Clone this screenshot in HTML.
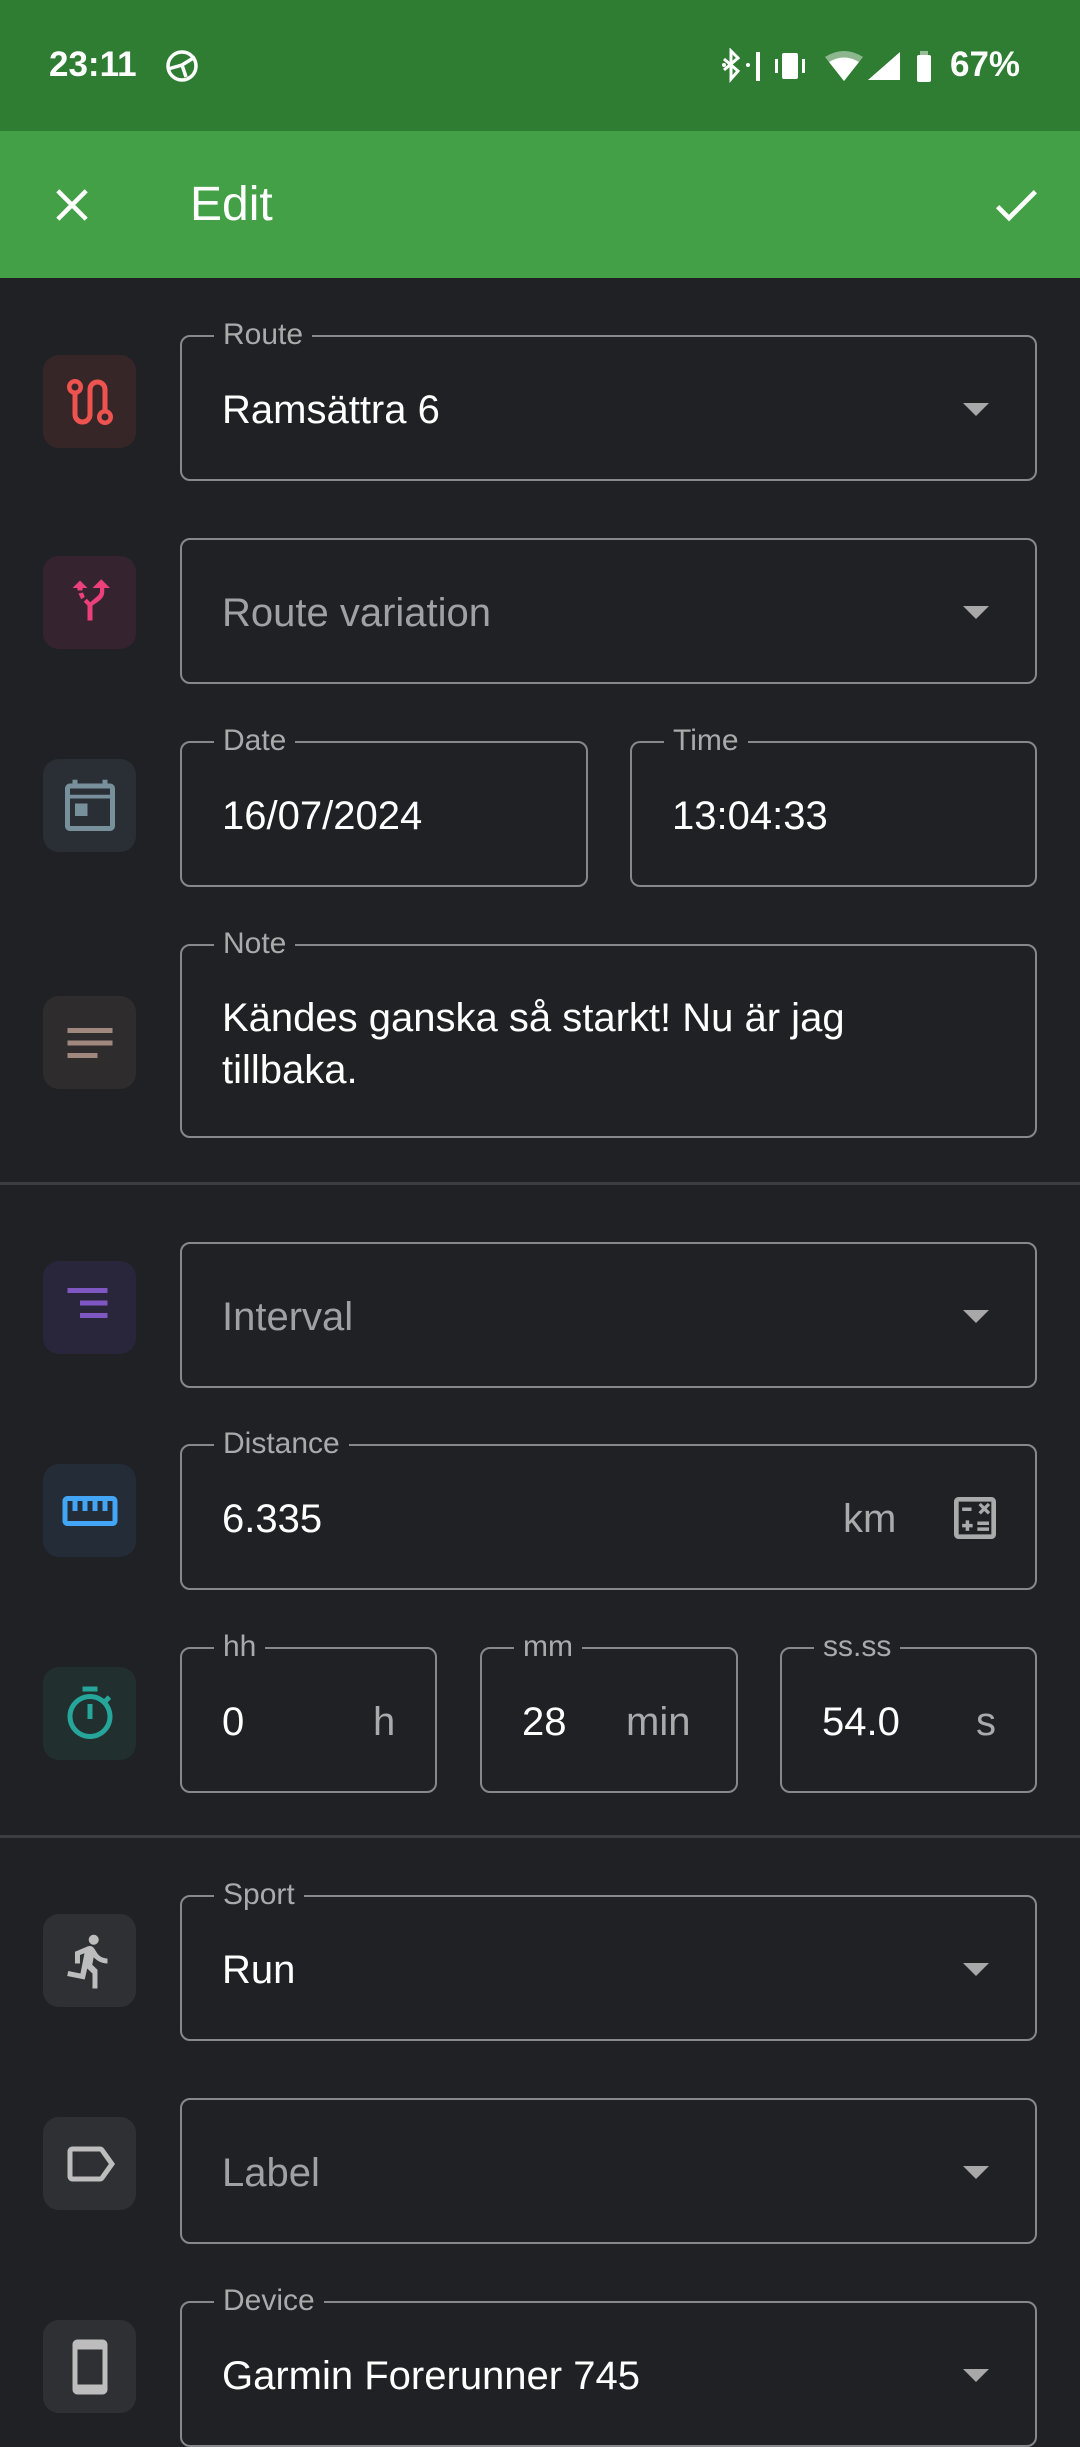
<!DOCTYPE html>
<html><head><meta charset="utf-8"><style>
*{margin:0;padding:0;box-sizing:border-box}
body{width:1080px;height:2400px;background:#202125;font-family:"Liberation Sans",sans-serif;position:relative;overflow:hidden;color:#fff}
.abs{position:absolute}
.sb{left:0;top:0;width:1080px;height:131px;background:#2e7d32}
.ab{left:0;top:131px;width:1080px;height:147px;background:#43a047}
.fld{position:absolute;border:2.5px solid #87888b;border-radius:10px}
.lbl{position:absolute;top:-19px;left:32px;padding:0 9px;background:#202125;color:#a9aaac;font-size:30px;line-height:34px}
.val{position:absolute;left:40px;font-size:40px;line-height:46px;color:#fff;white-space:nowrap}
.ph{color:#a0a1a4}
.tri{position:absolute;right:46px;width:0;height:0;border-left:13px solid transparent;border-right:13px solid transparent;border-top:13px solid #a8a8a8}
.ib{position:absolute;left:43px;width:93px;height:93px;border-radius:16px;display:flex;align-items:center;justify-content:center}
.ib svg{width:60px;height:60px}
.unit{position:absolute;font-size:40px;line-height:46px;color:#a9aaac}
.div{position:absolute;left:0;width:1080px;height:3px;background:#3c3d41}
</style></head><body>
<div class="abs sb"></div>
<div class="abs" style="left:49px;top:45px;font-size:35px;font-weight:bold;line-height:40px">23:11</div>
<svg class="abs" style="left:164px;top:48px" width="38" height="36" viewBox="0 0 38 34"><circle cx="18" cy="17" r="14" fill="none" stroke="#fff" stroke-width="3.5"/><path d="M4 20 L18 16 L31 8 M18 16 L22 28" stroke="#fff" stroke-width="3.5" fill="none"/></svg>
<svg class="abs" style="left:722px;top:48px" width="300" height="36" viewBox="0 0 300 34">
<path d="M2 10l14 12-7 8V2l7 7-14 12" stroke="#fff" stroke-width="3" fill="none"/><circle cx="2" cy="16" r="2" fill="#fff"/><circle cx="26" cy="16" r="2" fill="#fff"/><rect x="34" y="3" width="4" height="29" fill="#fff"/>
<rect x="60" y="4" width="16" height="26" rx="2" fill="#fff"/><rect x="53" y="10" width="3" height="14" fill="#fff"/><rect x="80" y="10" width="3" height="14" fill="#fff"/>
<path d="M103 8 Q122 -4 141 8 L122 32z" fill="#fff" opacity=".45"/><path d="M107 13 Q122 4 137 13 L122 32z" fill="#fff"/>
<path d="M146 31 L178 31 L178 3z" fill="#fff"/>
<rect x="198" y="2" width="8" height="6" fill="#fff" opacity=".5"/><rect x="195" y="6" width="14" height="27" rx="2" fill="#fff"/>
</svg>
<div class="abs" style="left:950px;top:45px;font-size:35px;font-weight:bold;line-height:40px">67%</div>
<div class="abs ab"></div>
<svg class="abs" style="left:45px;top:178px" width="54" height="54" viewBox="0 0 24 24"><path fill="#fff" d="M19 6.41L17.59 5 12 10.59 6.41 5 5 6.41 10.59 12 5 17.59 6.41 19 12 13.41 17.59 19 19 17.59 13.41 12z"/></svg>
<div class="abs" style="left:190px;top:178px;font-size:48px;line-height:54px;color:#fff">Edit</div>
<svg class="abs" style="left:988px;top:177px" width="56" height="56" viewBox="0 0 24 24"><path fill="#fff" d="M9 16.17L4.83 12l-1.42 1.41L9 19 21 7l-1.41-1.41z"/></svg>

<div class="ib" style="top:355px;background:#372628"><svg viewBox="0 0 24 24"><path fill="none" stroke="#ef5350" stroke-width="2" d="M6 8.5V17a3 3 0 0 0 6 0V7a3 3 0 0 1 6 0v8.5"/><circle cx="6" cy="6" r="2.3" fill="none" stroke="#ef5350" stroke-width="1.8"/><circle cx="18" cy="18" r="2.3" fill="none" stroke="#ef5350" stroke-width="1.8"/></svg></div>
<div class="fld" style="left:180px;top:335px;width:857px;height:146px"><div class="lbl">Route</div><div class="val" style="top:50px">Ramsättra 6</div><div class="tri" style="top:66px"></div></div>

<div class="ib" style="top:556px;background:#352430"><svg viewBox="0 0 24 24"><path fill="#ec407a" d="M5 6l3-3 3 3H9v1h-2V6z M13 6l3.5-3.5L20 6h-2.3v1.5c0 2-1.2 3-2.5 4L13 13v6h-2v-6l-1.5-1.5 1.2-1.2 1.4 1.4 2.9-2.5c.6-.5 1-1.2 1-2V6z M7.4 8.2l1.8-.4.7 1.8-1.4.9z"/></svg></div>
<div class="fld" style="left:180px;top:538px;width:857px;height:146px"><div class="val ph" style="top:50px">Route variation</div><div class="tri" style="top:66px"></div></div>

<div class="ib" style="top:759px;background:#2a2f35"><svg viewBox="0 0 24 24"><path fill="#78909c" d="M20 3h-1V1.5h-2V3H7V1.5H5V3H4c-1.1 0-2 .9-2 2v15c0 1.1.9 2 2 2h16c1.1 0 2-.9 2-2V5c0-1.1-.9-2-2-2zm0 17H4V9h16v11zm0-12.5H4V5h16v2.5zM6 11h5v5H6z"/></svg></div>
<div class="fld" style="left:180px;top:741px;width:408px;height:146px"><div class="lbl">Date</div><div class="val" style="top:50px">16/07/2024</div></div>
<div class="fld" style="left:630px;top:741px;width:407px;height:146px"><div class="lbl">Time</div><div class="val" style="top:50px">13:04:33</div></div>

<div class="ib" style="top:996px;background:#2e2c2c"><svg viewBox="0 0 24 24"><path fill="#a1887f" d="M3 6h18v2H3zM3 11h18v2H3zM3 16h12v2H3z"/></svg></div>
<div class="fld" style="left:180px;top:944px;width:857px;height:194px"><div class="lbl">Note</div><div class="val" style="top:46px;line-height:52px">Kändes ganska så starkt! Nu är jag<br>tillbaka.</div></div>
<div class="div" style="top:1182px"></div>

<div class="ib" style="top:1261px;background:#29253a"><svg viewBox="0 0 24 24"><path fill="#7e57c2" d="M3 4h16v2H3zM8 9h11v2H8zM8 14h11v2H8z"/></svg></div>
<div class="fld" style="left:180px;top:1242px;width:857px;height:146px"><div class="val ph" style="top:50px">Interval</div><div class="tri" style="top:66px"></div></div>

<div class="ib" style="top:1464px;background:#232c37"><svg viewBox="0 0 24 24"><path fill="#42a5f5" d="M21 6H3c-1.1 0-2 .9-2 2v8c0 1.1.9 2 2 2h18c1.1 0 2-.9 2-2V8c0-1.1-.9-2-2-2zm0 10H3V8h2v4h2V8h2v4h2V8h2v4h2V8h2v4h2V8h2v8z"/></svg></div>
<div class="fld" style="left:180px;top:1444px;width:857px;height:146px"><div class="lbl">Distance</div><div class="val" style="top:50px">6.335</div><div class="unit" style="left:661px;top:50px">km</div>
<svg class="abs" style="left:765px;top:44px" width="56" height="56" viewBox="0 0 24 24"><path fill="#a9aaac" d="M19 3H5c-1.1 0-2 .9-2 2v14c0 1.1.9 2 2 2h14c1.1 0 2-.9 2-2V5c0-1.1-.9-2-2-2zm0 16H5V5h14v14zM6.5 7.5h4v1.5h-4zM13.5 6.5l1 -1 1.5 1.5 1.5-1.5 1 1-1.5 1.5 1.5 1.5-1 1-1.5-1.5-1.5 1.5-1-1 1.5-1.5zM6.5 14.5h1.5V13h1.5v1.5H11V16H9.5v1.5H8V16H6.5zM13 13.5h5V15h-5zM13 16h5v1.5h-5z"/></svg></div>

<div class="ib" style="top:1667px;background:#212f2e"><svg viewBox="0 0 24 24"><path fill="#26a69a" d="M15 1H9v2h6V1zm-4 13h2V8h-2v6zm8.03-6.61l1.42-1.42c-.43-.51-.9-.99-1.410-1.41l-1.42 1.42C16.07 4.74 14.12 4 12 4c-4.97 0-9 4.03-9 9s4.020 9 9 9 9-4.03 9-9c0-2.12-.74-4.07-1.97-5.61zM12 20c-3.87 0-7-3.13-7-7s3.13-7 7-7 7 3.13 7 7-3.13 7-7 7z"/></svg></div>
<div class="fld" style="left:180px;top:1647px;width:257px;height:146px"><div class="lbl">hh</div><div class="val" style="top:50px">0</div><div class="unit" style="left:191px;top:50px">h</div></div>
<div class="fld" style="left:480px;top:1647px;width:258px;height:146px"><div class="lbl">mm</div><div class="val" style="top:50px">28</div><div class="unit" style="left:144px;top:50px">min</div></div>
<div class="fld" style="left:780px;top:1647px;width:257px;height:146px"><div class="lbl">ss.ss</div><div class="val" style="top:50px">54.0</div><div class="unit" style="left:194px;top:50px">s</div></div>
<div class="div" style="top:1835px"></div>

<div class="ib" style="top:1914px;background:#2f3034"><svg viewBox="0 0 24 24"><path fill="#bdbdbd" d="M13.49 5.48c1.1 0 2-.9 2-2s-.9-2-2-2-2 .9-2 2 .9 2 2 2zm-3.6 13.9l1-4.4 2.1 2v6h2v-7.5l-2.1-2 .6-3c1.3 1.5 3.3 2.5 5.5 2.5v-2c-1.9 0-3.5-1-4.3-2.4l-1-1.6c-.4-.6-1-1-1.7-1-.3 0-.5.1-.8.1l-5.2 2.2v4.7h2v-3.4l1.8-.7-1.6 8.1-4.9-1-.4 2 7 1.4z"/></svg></div>
<div class="fld" style="left:180px;top:1895px;width:857px;height:146px"><div class="lbl">Sport</div><div class="val" style="top:50px">Run</div><div class="tri" style="top:66px"></div></div>

<div class="ib" style="top:2117px;background:#2f3034"><svg viewBox="0 0 24 24"><path fill="#bdbdbd" d="M17.63 5.84C17.27 5.33 16.67 5 16 5L5 5.01C3.9 5.01 3 5.9 3 7v10c0 1.1.9 1.99 2 1.99L16 19c.67 0 1.27-.33 1.63-.84L22 12l-4.37-6.16zM16 17H5V7h11l3.55 5L16 17z"/></svg></div>
<div class="fld" style="left:180px;top:2098px;width:857px;height:146px"><div class="val ph" style="top:50px">Label</div><div class="tri" style="top:66px"></div></div>

<div class="ib" style="top:2320px;background:#2f3034"><svg viewBox="0 0 24 24"><path fill="#bdbdbd" d="M17 1.01L7 1c-1.1 0-2 .9-2 2v18c0 1.1.9 2 2 2h10c1.1 0 2-.9 2-2V3c0-1.1-.9-1.990-2-1.99zM17 19H7V5h10v14z"/></svg></div>
<div class="fld" style="left:180px;top:2301px;width:857px;height:146px"><div class="lbl">Device</div><div class="val" style="top:50px">Garmin Forerunner 745</div><div class="tri" style="top:66px"></div></div>
</body></html>
